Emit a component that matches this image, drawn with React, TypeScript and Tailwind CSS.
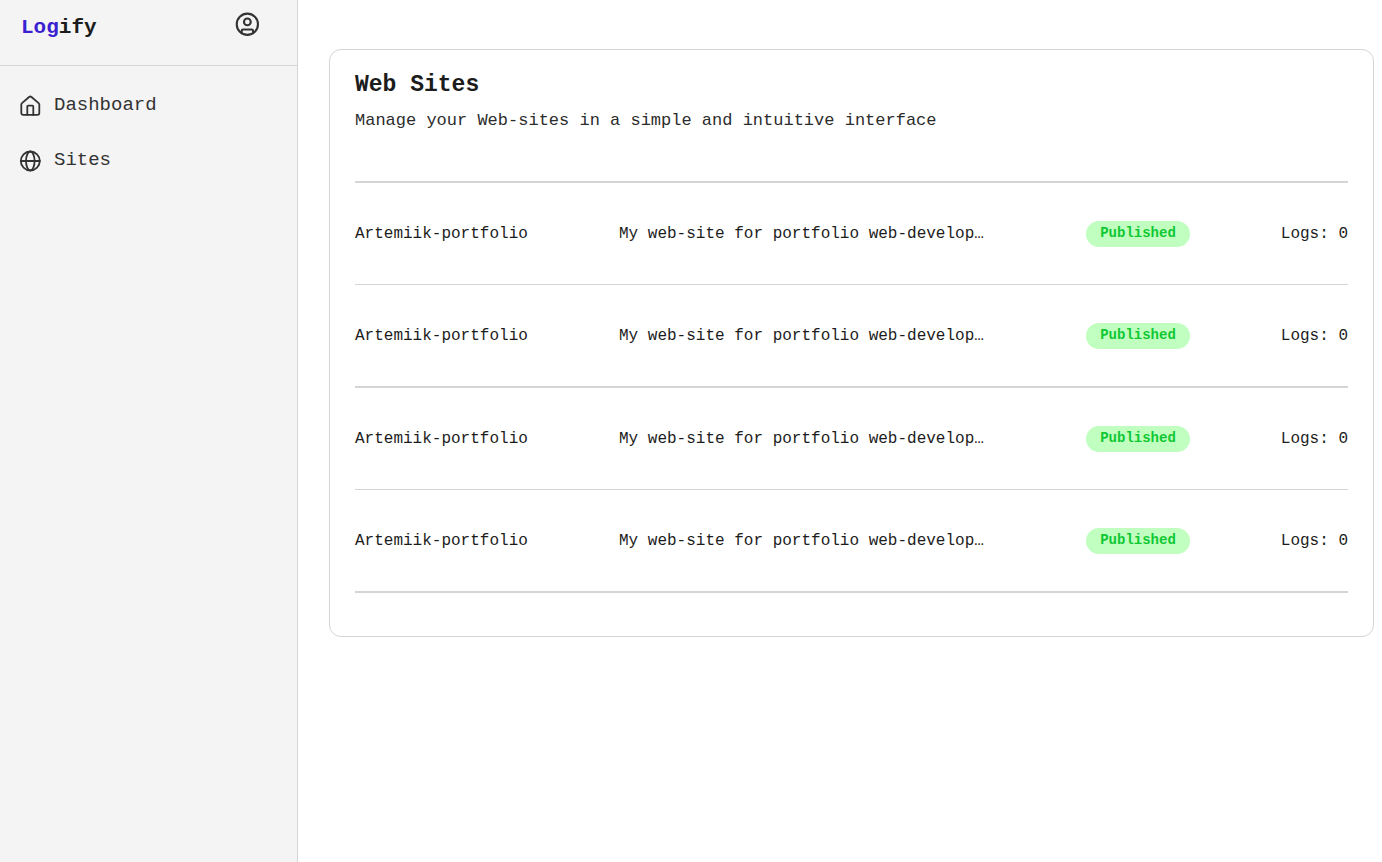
import type { ReactNode } from 'react';

type Site = { id: number; name: string; description: string; status: string; logs: number };

const sites: Site[] = [1, 2, 3, 4].map((id) => ({
  id,
  name: 'Artemiik-portfolio',
  description: 'My web-site for portfolio web-develop…',
  status: 'Published',
  logs: 0,
}));

function Icon({ className, children }: { className: string; children: ReactNode }) {
  return (
    <svg
      className={className}
      viewBox="0 0 24 24"
      fill="none"
      stroke="currentColor"
      strokeWidth={1.8}
      strokeLinecap="round"
      strokeLinejoin="round"
      aria-hidden="true"
    >
      {children}
    </svg>
  );
}

function UserIcon() {
  return (
    <Icon className="size-7">
      <circle cx="12.3" cy="12.2" r="9.100" />
      <circle cx="12.3" cy="10.200" r="2.900" />
      <path d="M7.400 19.800v-1.900a1.200 1.200 0 0 1 1.200-1.200h7.400a1.200 1.200 0 0 1 1.200 1.200v1.900" />
    </Icon>
  );
}

function HomeIcon() {
  return (
    <Icon className="mt-0.5 size-6">
      <path d="M3.300 10.600a2 2 0 0 1 .7-1.500l7.100-6.100a1.900 1.900 0 0 1 2.400 0l7.100 6.100a2 2 0 0 1 .7 1.500v8.400a1.900 1.900 0 0 1-1.900 1.900H5.200a1.900 1.900 0 0 1-1.900-1.900z" />
      <path d="M9.300 20.900v-8.300a.9.9 0 0 1 .9-.9h4.200a.9.9 0 0 1 .9.9v8.300" />
    </Icon>
  );
}

function GlobeIcon() {
  return (
    <Icon className="mt-0.5 size-6">
      <circle cx="12.300" cy="12" r="9.500" />
      <ellipse cx="12.300" cy="12" rx="4.300" ry="9.500" />
      <path d="M2.800 12h19" />
    </Icon>
  );
}

function Sidebar() {
  return (
    <aside className="w-[298px] shrink-0 border-r border-[#d5d5d5] bg-[#f4f4f4] text-[#333]">
      <header className="flex h-[66px] items-start justify-between border-b border-[#d5d5d5] pt-2.5 pr-9 pl-[21px]">
        <a href="#" className="text-[21px] leading-9 font-bold text-[#1c1c1c]">
          <span className="text-[#3b1fd1]">Log</span>ify
        </a>
        <button type="button" aria-label="Account" className="cursor-pointer">
          <UserIcon />
        </button>
      </header>
      <nav className="flex flex-col gap-[29px] px-[18px] pt-[26px] text-[19px] leading-6">
        <a href="#dashboard" className="flex items-center gap-3">
          <HomeIcon />
          Dashboard
        </a>
        <a href="#sites" className="flex items-center gap-3">
          <GlobeIcon />
          Sites
        </a>
      </nav>
    </aside>
  );
}

function SiteTable() {
  return (
    <table className="mt-12 w-full table-fixed border-separate border-spacing-0 border-t-2 border-[#d5d5d5] text-left text-base">
      <colgroup>
        <col className="w-[264px]" />
        <col />
        <col className="w-[150px]" />
        <col className="w-[112px]" />
      </colgroup>
      <tbody className="[&>tr:nth-child(even)>td]:h-[103px] [&>tr:nth-child(even)>td]:border-b-2">
        {sites.map((site) => (
          <tr key={site.id}>
            <td className="h-[102px] border-b border-[#d5d5d5] p-0">{site.name}</td>
            <td className="h-[102px] truncate border-b border-[#d5d5d5] p-0">{site.description}</td>
            <td className="h-[102px] border-b border-[#d5d5d5] p-0">
              <span className="inline-flex h-[26px] w-[104px] items-center justify-center rounded-full bg-[#c0ffc0] align-middle text-[14px] font-bold text-[#0fc832]">
                {site.status}
              </span>
            </td>
            <td className="h-[102px] border-b border-[#d5d5d5] p-0 text-right">Logs: {site.logs}</td>
          </tr>
        ))}
      </tbody>
    </table>
  );
}

export default function App() {
  return (
    <div className="flex min-h-screen bg-white font-['Liberation_Mono',monospace] text-[#1c1c1c]">
      <Sidebar />
      <main className="min-w-0 flex-1 pt-[49px] pr-2 pl-[31px]">
        <section className="rounded-xl border border-[#d5d5d5] px-[25px] pt-[19px] pb-[43px]">
          <h1 className="text-[23px] leading-8 font-bold">Web Sites</h1>
          <p className="mt-2 text-[17px] leading-6 text-[#2c2c2c]">
            Manage your Web-sites in a simple and intuitive interface
          </p>
          <SiteTable />
        </section>
      </main>
    </div>
  );
}
